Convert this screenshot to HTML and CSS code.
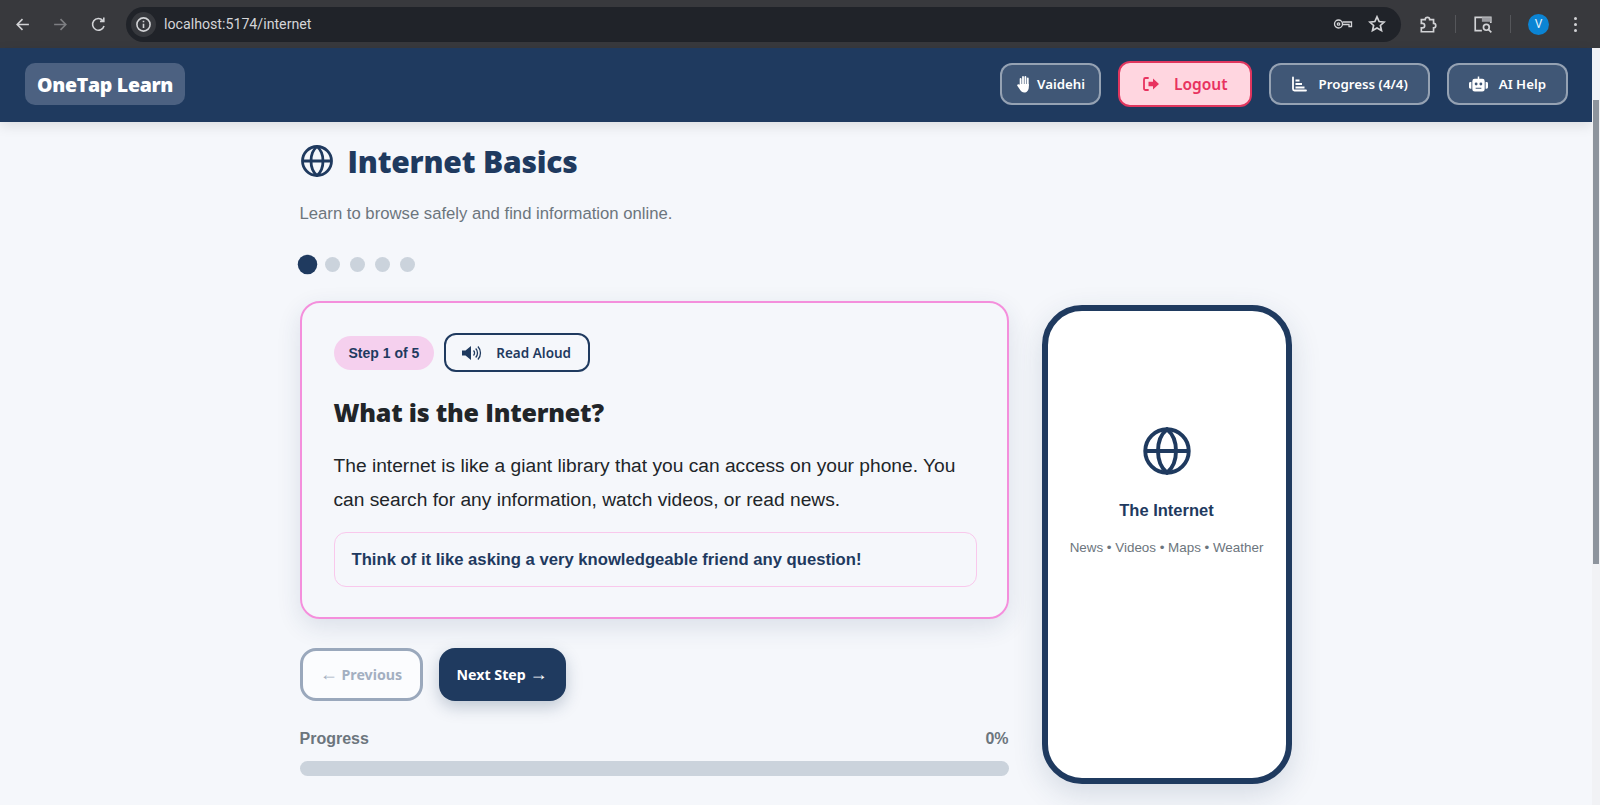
FILE: index.html
```html
<!DOCTYPE html>
<html lang="en">
<head>
    <meta charset="UTF-8">
    <meta name="viewport" content="width=device-width, initial-scale=1.0">
    <title>OneTap Learn</title>
    <link rel="stylesheet" href="styles.css">
</head>

<body>
    <!-- Browser toolbar -->
    <div class="chrome">
        <svg class="chrome-icon back" viewBox="0 0 16 16"><path d="M14 8H3M8 3L3 8l5 5"/></svg>
        <svg class="chrome-icon forward" viewBox="0 0 16 16"><path d="M2 8h11M8 3l5 5-5 5"/></svg>
        <svg class="chrome-icon reload" viewBox="0 0 16 16"><path d="M13.2 9.500A5.500 5.500 0 1 1 12 4.200M13 1.500v3.600H9.400"/></svg>
        <div class="omnibox">
            <span class="site-info">
                <svg class="chrome-icon" viewBox="0 0 16 16"><circle cx="8" cy="8" r="6.200"/><path d="M8 7.200v4M8 4.500v1.300"/></svg>
            </span>
            <span class="url">localhost:5174/internet</span>
            <svg class="chrome-icon key" viewBox="0 0 20 16"><circle cx="5.500" cy="8" r="4"/><circle cx="5.500" cy="8" r="1.200"/><path d="M9.500 6h9v4.500h-2.500V8.500H9.500"/></svg>
            <svg class="chrome-icon star" viewBox="0 0 16 16"><path d="M8 1.600l1.900 4.200 4.500.5-3.400 3 1 4.500L8 11.500l-4 2.300 1-4.500-3.400-3 4.500-.5z"/></svg>
        </div>
        <svg class="chrome-icon puzzle" viewBox="0 0 18 18"><path d="M3 5h3.500a2 2 0 1 1 4 0H14v3.500a2 2 0 1 1 0 4V16H3v-3.500h1a2 2 0 0 0 0-4H3z"/></svg>
        <span class="chrome-sep"></span>
        <svg class="chrome-icon tab-search" viewBox="0 0 18 18"><path d="M8 15H2V3h14v5"/><rect class="filled" x="8" y="3" width="8" height="4"/><circle cx="12" cy="12" r="2.600"/><path d="M14 14l2.500 2.500"/></svg>
        <span class="chrome-sep"></span>
        <span class="avatar">V</span>
        <span class="kebab"><i></i><i></i><i></i></span>
    </div>

    <div class="viewport">
        <div class="page">
            <nav class="navbar">
                <a class="brand">OneTap Learn</a>
                <div class="nav-actions">
                    <button class="nav-btn user-btn">
                        <svg class="nav-icon hand-icon" viewBox="0 0 16 18"><path class="hand" d="M4.600 4v6M7 2v7M9.400 2v7M11.800 3.500v7"/><path class="fill" d="M3.700 9H12.800V12C12.800 15.500 10.800 17.500 8.300 17.500 6.300 17.500 5.200 16.500 4.200 15L1.300 10.800C.7 9.800 2 8.600 3 9.400L3.700 10z"/></svg>
                        Vaidehi
                    </button>
                    <button class="nav-btn logout-btn">
                        <svg class="nav-icon logout-icon" viewBox="0 0 18 16"><path class="line" d="M6 2H3.500A1.500 1.500 0 0 0 2 3.500v9A1.500 1.500 0 0 0 3.500 14H6"/><path class="fill" d="M11 2.500L17 8l-6 5.500V10.300H6.500V5.700H11z"/></svg>
                        Logout
                    </button>
                    <button class="nav-btn wide-btn">
                        <svg class="nav-icon" viewBox="0 0 16 16"><path class="line" d="M2 1.500V13a1.500 1.500 0 0 0 1.500 1.500H15"/><path class="fill" d="M4.500 3.500h4v2h-4zM4.500 7h6.500v2H4.500zM4.500 10.500h9v2h-9z"/></svg>
                        Progress (4/4)
                    </button>
                    <button class="nav-btn wide-btn help-btn">
                        <svg class="nav-icon robot" viewBox="0 0 20 16"><path class="fill" fill-rule="evenodd" d="M9.200 0h1.600v2.500H14a2.500 2.500 0 0 1 2.500 2.500v8.500A2.500 2.500 0 0 1 14 16H6a2.500 2.500 0 0 1-2.500-2.500V5A2.500 2.500 0 0 1 6 2.500h3.200zM7.500 6.500a1.500 1.500 0 1 0 0 3 1.500 1.500 0 0 0 0-3zm5 0a1.500 1.500 0 1 0 0 3 1.500 1.500 0 0 0 0-3zM7 12v1h6v-1z"/><path class="fill" d="M0 7.500A1.500 1.500 0 0 1 1.500 6h1v7h-1A1.500 1.500 0 0 1 0 11.500zM20 7.500A1.500 1.500 0 0 0 18.500 6h-1v7h1a1.500 1.500 0 0 0 1.500-1.500z"/></svg>
                        AI Help
                    </button>
                </div>
            </nav>

            <main class="lesson-page">
                <h1 class="lesson-title">
                    <svg class="globe title-globe" viewBox="0 0 32 32"><circle cx="16" cy="16" r="14.500"/><path d="M16 1.500C24 8 24 24 16 30.500 8 24 8 8 16 1.500zM1.500 16h29"/></svg>
                    Internet Basics
                </h1>
                <p class="lesson-sub">Learn to browse safely and find information online.</p>

                <div class="dots">
                    <span class="dot active"></span>
                    <span class="dot"></span>
                    <span class="dot"></span>
                    <span class="dot"></span>
                    <span class="dot"></span>
                </div>

                <div class="lesson-grid">
                    <div class="lesson-left">
                        <section class="step-card">
                            <div class="step-top">
                                <span class="step-badge">Step 1 of 5</span>
                                <button class="read-btn">
                                    <svg class="speaker" viewBox="0 0 20 16"><path class="fill" d="M0 5.500h3.500L9 1v14l-5.500-4.500H0z"/><path class="line" d="M11.500 5.500a3.500 3.500 0 0 1 0 5M13.700 3.500a6.500 6.500 0 0 1 0 9M15.900 1.500a9.500 9.500 0 0 1 0 13"/></svg>
                                    Read Aloud
                                </button>
                            </div>
                            <h2 class="step-title">What is the Internet?</h2>
                            <p class="step-text">The internet is like a giant library that you can access on your phone. You can search for any information, watch videos, or read news.</p>
                            <div class="step-tip">Think of it like asking a very knowledgeable friend any question!</div>
                        </section>

                        <div class="step-nav">
                            <button class="step-btn prev"><span class="arrow">←</span> Previous</button>
                            <button class="step-btn next">Next Step <span class="arrow">→</span></button>
                        </div>

                        <div class="progress-head">
                            <span>Progress</span>
                            <span>0%</span>
                        </div>
                        <div class="progress-track"></div>
                    </div>

                    <div class="phone">
                        <svg class="globe phone-globe" viewBox="0 0 32 32"><circle cx="16" cy="16" r="14.500"/><path d="M16 1.500C24 8 24 24 16 30.500 8 24 8 8 16 1.500zM1.500 16h29"/></svg>
                        <div class="phone-title">The Internet</div>
                        <div class="phone-sub">News • Videos • Maps • Weather</div>
                    </div>
                </div>
            </main>
        </div>
        <div class="scrollbar"><div class="scroll-thumb"></div></div>
    </div>
</body>

</html>
```

FILE: styles.css
```css
* {
    box-sizing: border-box;
}

html,
body {
    margin: 0;
    height: 805px;
    overflow: hidden;
}

body {
    background-color: #f5f7fb;
    font-family: "Liberation Sans", Arial, sans-serif;
    color: #212529;
}

/* browser toolbar */
.chrome {
    display: flex;
    align-items: center;
    height: 48px;
    padding-left: 14px;
    background-color: #38393d;
}

.chrome-icon {
    width: 17px;
    height: 17px;
    flex: none;
    fill: none;
    stroke: #d2d3d6;
    stroke-width: 1.500;
}

.chrome-icon .filled {
    fill: #9a9ba0;
    stroke: none;
}

.back {
    margin-right: 21px;
}

.forward {
    margin-right: 21px;
    stroke: #7d7e82;
}

.reload {
    margin-right: 19px;
}

.omnibox {
    display: flex;
    align-items: center;
    width: 1275px;
    height: 35px;
    padding: 0 15px 0 5px;
    border-radius: 18px;
    background-color: #202329;
}

.site-info {
    display: flex;
    align-items: center;
    justify-content: center;
    width: 25px;
    height: 25px;
    border-radius: 50%;
    background-color: #36383d;
}

.url {
    flex: 1;
    margin-left: 8px;
    font-family: Roboto, sans-serif;
    font-size: 14.200px;
    color: #d4d5d8;
}

.key {
    width: 20px;
    height: 16px;
    margin-right: 15px;
    stroke-width: 1.300;
}

.star {
    width: 18px;
    height: 18px;
}

.puzzle {
    width: 20px;
    height: 20px;
    margin-left: 17px;
}

.chrome-sep {
    width: 1px;
    height: 18px;
    margin: 0 17px;
    background-color: #55565a;
}

.tab-search {
    width: 20px;
    height: 20px;
}

.avatar {
    display: flex;
    align-items: center;
    justify-content: center;
    width: 21px;
    height: 21px;
    border-radius: 50%;
    background-color: #0b84d4;
    font-family: Roboto, sans-serif;
    font-size: 12px;
    color: #e8f3fb;
}

.kebab {
    display: flex;
    flex-direction: column;
    gap: 3px;
    margin-left: 25px;
}

.kebab i {
    width: 3px;
    height: 3px;
    border-radius: 50%;
    background-color: #d2d3d6;
}

/* page */
.viewport {
    display: flex;
    height: 757px;
}

.page {
    flex: 1;
    min-width: 0;
}

.scrollbar {
    width: 8px;
    padding: 52px 1px 0 1px;
    background-color: #f1f2f5;
}

.scroll-thumb {
    height: 464px;
    background-color: #8d949d;
}

.navbar {
    display: flex;
    align-items: center;
    justify-content: space-between;
    height: 74px;
    padding: 0 24px 2px 25px;
    background-color: #1f3a5f;
    box-shadow: 0 4px 12px rgba(0, 0, 0, 0.1);
}

.brand {
    display: flex;
    align-items: center;
    height: 42px;
    padding: 0 12px;
    border-radius: 10px;
    background-color: #4c6181;
    font-family: "Open Sans", sans-serif;
    font-size: 19.500px;
    font-weight: 800;
    letter-spacing: -0.3px;
    color: #fff;
}

.nav-actions {
    display: flex;
    align-items: center;
    gap: 17px;
}

.nav-btn {
    display: flex;
    align-items: center;
    gap: 9px;
    height: 42px;
    padding: 0 15px;
    border: 2px solid rgba(255, 255, 255, 0.45);
    border-radius: 12px;
    background-color: rgba(255, 255, 255, 0.15);
    font-family: "Noto Sans", sans-serif;
    font-size: 13.300px;
    font-weight: 600;
    color: #fff;
}

.user-btn {
    gap: 5px;
    padding: 0 14px;
}

.wide-btn {
    gap: 12px;
    padding: 0 20px;
}

.help-btn {
    gap: 11px;
}

.nav-icon {
    width: 16px;
    height: 16px;
    flex: none;
}

.nav-icon .fill {
    fill: currentColor;
}

.nav-icon .line,
.nav-icon .hand {
    fill: none;
    stroke: currentColor;
    stroke-width: 1.800;
    stroke-linecap: round;
}

.hand-icon {
    height: 18px;
}

.logout-btn {
    gap: 14px;
    height: 46px;
    padding: 0 22px;
    border-color: #e0365e;
    background-color: #ffd6e0;
    font-size: 15.500px;
    color: #e8325f;
}

.logout-icon {
    width: 18px;
}

.robot {
    width: 19px;
}

.lesson-page {
    width: 993px;
    margin: 0 auto;
}

.lesson-title {
    display: flex;
    align-items: center;
    gap: 15px;
    height: 40px;
    margin: 19px 0 0 0;
    font-family: "Open Sans", sans-serif;
    font-size: 30px;
    font-weight: 800;
    letter-spacing: -0.2px;
    color: #1f3a5f;
}

.globe {
    flex: none;
    fill: none;
    stroke: #1f3a5f;
}

.title-globe {
    width: 32px;
    height: 32px;
    margin-left: 1px;
    stroke-width: 2.800;
}

.lesson-sub {
    margin: 23px 0 0 0;
    font-size: 16.700px;
    line-height: 20px;
    color: #6c757d;
}

.dots {
    display: flex;
    align-items: center;
    gap: 10px;
    margin-top: 33px;
}

.dot {
    width: 15px;
    height: 15px;
    border-radius: 50%;
    background-color: #cbd3dc;
}

.dot.active {
    background-color: #1f3a5f;
    transform: scale(1.3);
}

.lesson-grid {
    display: grid;
    grid-template-columns: 709px 250px;
    gap: 33px;
    align-items: start;
    margin-top: 29px;
}

.step-card {
    height: 318px;
    padding: 30px 30px 30px 32px;
    border: 2px solid #f48fdc;
    border-radius: 20px;
    box-shadow: 0 8px 24px rgba(31, 58, 95, 0.12);
}

.step-top {
    display: flex;
    align-items: center;
    gap: 10px;
}

.step-badge {
    display: flex;
    align-items: center;
    height: 34px;
    padding: 0 15px;
    border-radius: 17px;
    background-color: #f5d0ee;
    font-size: 14px;
    font-weight: 700;
    color: #1f3a5f;
}

.read-btn {
    display: flex;
    align-items: center;
    gap: 14px;
    height: 39px;
    padding: 0 17px 0 16px;
    border: 2px solid #1f3a5f;
    border-radius: 12px;
    background-color: transparent;
    font-family: "Noto Sans", sans-serif;
    font-size: 13.500px;
    font-weight: 600;
    color: #1f3a5f;
}

.speaker {
    width: 20px;
    height: 16px;
}

.speaker .fill {
    fill: #1f3a5f;
}

.speaker .line {
    fill: none;
    stroke: #1f3a5f;
    stroke-width: 1.300;
}

.step-title {
    margin: 22px 0 0 0;
    font-family: "Open Sans", sans-serif;
    font-size: 25px;
    font-weight: 800;
    line-height: 36px;
    letter-spacing: -0.2px;
    color: #212529;
}

.step-text {
    margin: 19px 0 0 0;
    font-size: 19.200px;
    line-height: 34px;
    color: #212529;
}

.step-tip {
    display: flex;
    align-items: center;
    height: 55px;
    margin-top: 15px;
    padding: 0 17px;
    border: 1px solid #f9c8ec;
    border-radius: 12px;
    font-size: 16.670px;
    font-weight: 700;
    color: #1f3a5f;
}

.step-nav {
    display: flex;
    gap: 16px;
    margin-top: 29px;
}

.step-btn {
    height: 53px;
    padding: 0;
    border-radius: 16px;
    font-family: "Noto Sans", sans-serif;
    font-size: 14.200px;
    font-weight: 700;
}

.arrow {
    font-family: "Liberation Sans", sans-serif;
    font-size: 18px;
    font-weight: 400;
    line-height: 1;
}

.step-btn.prev {
    width: 123px;
    border: 3px solid #9aa8bc;
    background-color: #fbfcfe;
    color: #a3afc1;
}

.step-btn.next {
    width: 127px;
    border: none;
    background-color: #1f3a5f;
    color: #fff;
    box-shadow: 0 6px 16px rgba(31, 58, 95, 0.25);
}

.progress-head {
    display: flex;
    justify-content: space-between;
    margin-top: 29px;
    font-size: 16px;
    font-weight: 700;
    line-height: 18px;
    color: #6c757d;
}

.progress-track {
    height: 15px;
    margin-top: 13px;
    border-radius: 8px;
    background-color: #cbd3dc;
}

.phone {
    display: flex;
    flex-direction: column;
    align-items: center;
    height: 479px;
    margin-top: 4px;
    padding-top: 116px;
    border: 6px solid #1f3a5f;
    border-radius: 40px;
    background-color: #fff;
    box-shadow: 0 10px 30px rgba(31, 58, 95, 0.15);
}

.phone-globe {
    width: 48px;
    height: 48px;
    stroke-width: 2.600;
}

.phone-title {
    margin-top: 26px;
    font-size: 16.500px;
    font-weight: 700;
    color: #1f3a5f;
}

.phone-sub {
    margin-top: 20px;
    font-size: 13.400px;
    color: #6c757d;
}
```
